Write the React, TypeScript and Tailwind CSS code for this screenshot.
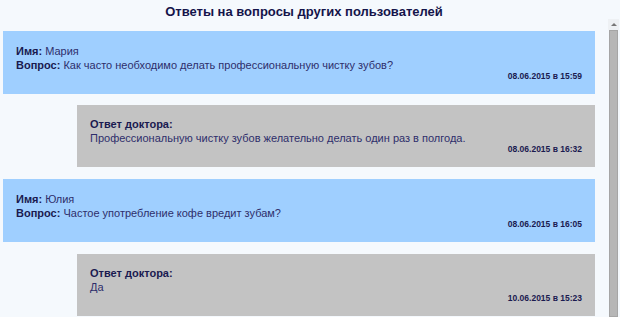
import React from "react";

type Item = { kind: "q" | "a"; label1: string; value1?: string; label2?: string; value2: string; date: string };

const items: Item[] = [
  { kind: "q", label1: "Имя:", value1: " Мария", label2: "Вопрос:", value2: " Как часто необходимо делать профессиональную чистку зубов?", date: "08.06.2015 в 15:59" },
  { kind: "a", label1: "Ответ доктора:", value2: "Профессиональную чистку зубов желательно делать один раз в полгода.", date: "08.06.2015 в 16:32" },
  { kind: "q", label1: "Имя:", value1: " Юлия", label2: "Вопрос:", value2: " Частое употребление кофе вредит зубам?", date: "08.06.2015 в 16:05" },
  { kind: "a", label1: "Ответ доктора:", value2: "Да", date: "10.06.2015 в 15:23" },
];

function Card({ it }: { it: Item }) {
  const isQ = it.kind === "q";
  return (
    <div
      className={
        isQ
          ? "ml-[3px] mr-[13px] h-[63px] bg-[#9fcfff] pl-[13px] pr-[13px] pt-[13px]"
          : "ml-[77px] mr-[13px] h-[62px] bg-[#c3c3c3] pl-[13px] pr-[13px] pt-[12px]"
      }
    >
      <div className="text-[11px] leading-[14px] text-[#2e2e6b]">
        <span className="font-bold text-[#1a1a50]">{it.label1}</span>
        {it.value1}
      </div>
      <div className="text-[11px] leading-[14px] text-[#2e2e6b]">
        {it.label2 && <span className="font-bold text-[#1a1a50]">{it.label2}</span>}
        {it.value2}
      </div>
      <div className="mt-[-2px] text-right text-[8.5px] font-bold leading-[12px] text-[#1a1a50]">{it.date}</div>
    </div>
  );
}

export default function App() {
  return (
    <div className="flex h-[317px] w-[620px] overflow-hidden bg-[#f5f9fd] font-['Liberation_Sans',Arial,sans-serif]">
      <div className="flex-1">
        <div className="flex h-[24px] items-center justify-center text-[13px] font-bold text-[#14144a]">
          Ответы на вопросы других пользователей
        </div>
        <div className="mt-[7px] flex flex-col">
          <Card it={items[0]} />
          <div className="h-[11px]" />
          <Card it={items[1]} />
          <div className="h-[12px]" />
          <Card it={items[2]} />
          <div className="h-[12px]" />
          <Card it={items[3]} />
        </div>
      </div>
      <div className="flex w-[12px] flex-col pt-[19px]">
        <div className="flex h-[11px] w-[11px] items-center justify-center bg-[#eef1f4]">
          <div className="h-0 w-0 border-x-[3px] border-b-[3px] border-x-transparent border-b-[#777]" />
        </div>
        <div className="ml-[1px] w-[9px] flex-1 border border-[#a5a5a5] bg-[#b6b6b6]" />
      </div>
    </div>
  );
}
